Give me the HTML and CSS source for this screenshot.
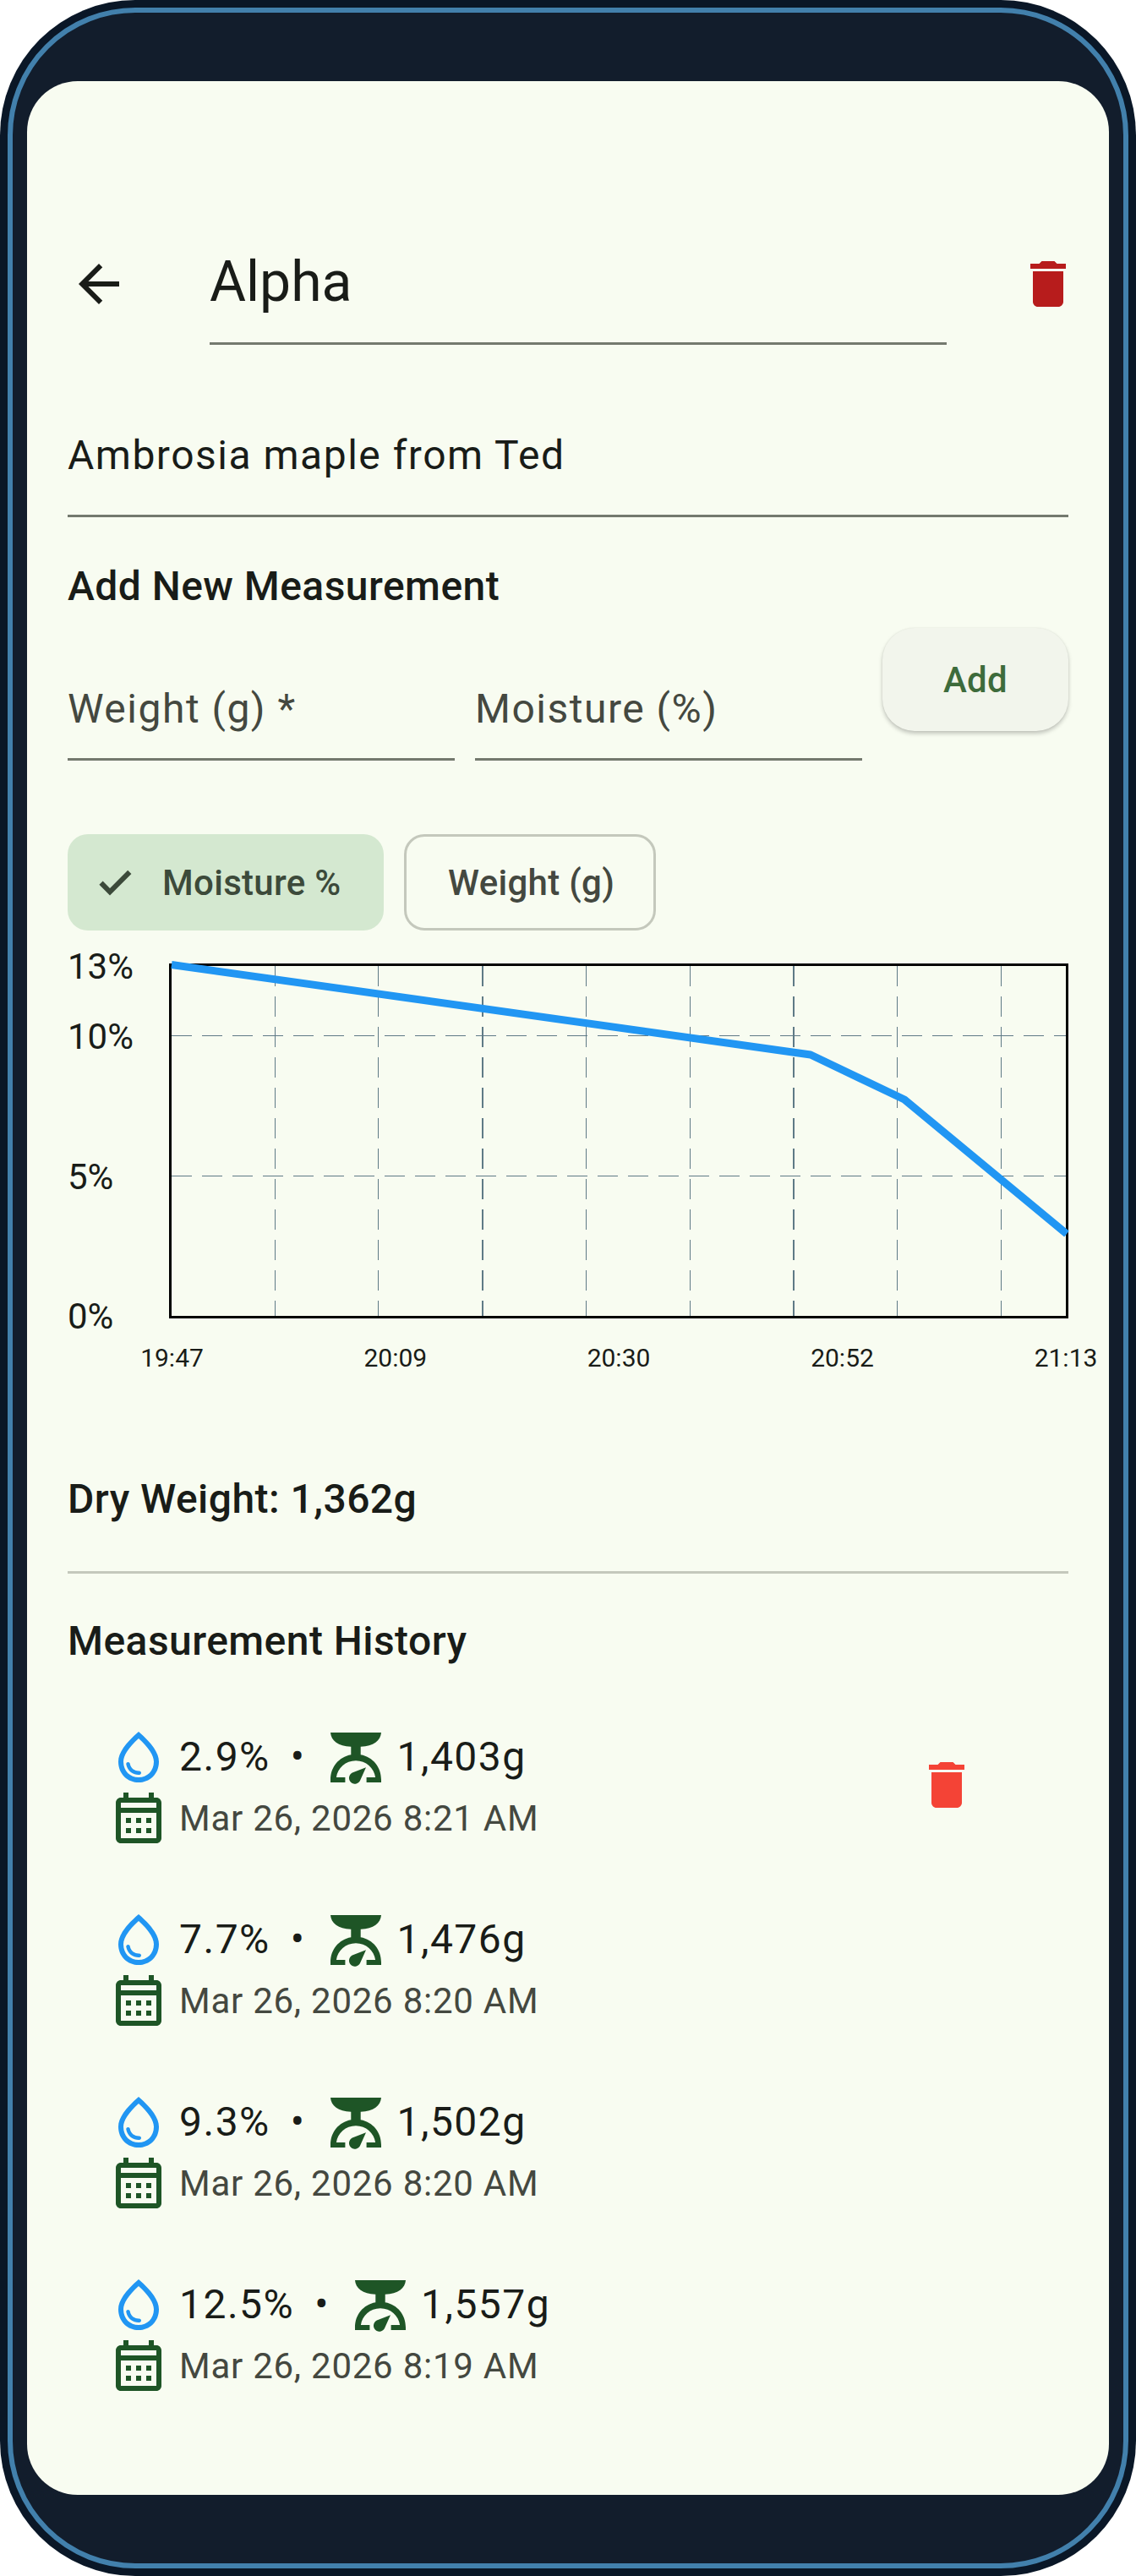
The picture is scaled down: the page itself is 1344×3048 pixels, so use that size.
FILE: index.html
```html
<!DOCTYPE html>
<html lang="en">
<head>
<meta charset="utf-8">
<title>Alpha</title>
<link rel="stylesheet" href="styles.css">
</head>
<body>
<svg class="sprite" xmlns="http://www.w3.org/2000/svg">
  <symbol id="i-back" viewBox="0 0 24 24"><path d="M20 11H7.83l5.59-5.59L12 4l-8 8 8 8 1.41-1.41L7.83 13H20v-2z"/></symbol>
  <symbol id="i-delete" viewBox="0 0 24 24"><path d="M6 19c0 1.1.9 2 2 2h8c1.1 0 2-.9 2-2V7H6v12zM19 4h-3.5l-1-1h-5l-1 1H5v2h14V4z"/></symbol>
  <symbol id="i-check" viewBox="0 0 24 24"><path d="M9 16.17L4.83 12l-1.42 1.41L9 19 21 7l-1.41-1.41z"/></symbol>
  <symbol id="i-drop" viewBox="0 0 24 24"><path d="M12 2c-5.33 4.55-8 8.48-8 11.8 0 4.98 3.8 8.2 8 8.2s8-3.22 8-8.2c0-3.32-2.67-7.25-8-11.8zm0 18c-3.35 0-6-2.57-6-6.2 0-2.34 1.95-5.44 6-9.14 4.05 3.7 6 6.79 6 9.14 0 3.63-2.65 6.2-6 6.2zm-4.17-6c.37 0 .67.26.74.62.41 2.22 2.28 2.98 3.64 2.87.43-.02.79.32.79.75 0 .4-.32.73-.72.75-2.13.13-4.62-1.09-5.19-4.12-.08-.45.28-.87.74-.87z"/></symbol>
  <symbol id="i-calendar" viewBox="0 0 24 24"><path d="M19 4h-1V2h-2v2H8V2H6v2H5c-1.11 0-1.99.9-1.99 2L3 20c0 1.1.89 2 2 2h14c1.1 0 2-.9 2-2V6c0-1.1-.9-2-2-2zm0 16H5V10h14v10zm0-12H5V6h14v2zM9 14H7v-2h2v2zm4 0h-2v-2h2v2zm4 0h-2v-2h2v2zm-8 4H7v-2h2v2zm4 0h-2v-2h2v2zm4 0h-2v-2h2v2z"/></symbol>
  <symbol id="i-scale" viewBox="0 0 24 24"><path d="M2 2.300H22C21.800 5.400 19 7.700 13.900 7.900V11.100C18.800 12 22 16 22 21V22H16.200V20H19.700C19.200 16.300 16 13.400 12 13.400S4.800 16.300 4.300 20H7.800V22H2V21C2 16 5.200 12 10.100 11.100V7.900C5 7.700 2.200 5.400 2 2.300Z"/><path d="M16 16.100L13.800 21A2.300 2.300 0 1 1 10.600 18.200Z"/></symbol>
</svg>
<div class="device">
  <div class="bezel">
    <main class="screen">
      <header class="header">
        <svg class="icon72 back"><use href="#i-back"/></svg>
        <div class="title">Alpha</div>
        <svg class="icon72 del-dark"><use href="#i-delete"/></svg>
      </header>
      <div class="desc"><span>Ambrosia maple from Ted</span></div>
      <h2 class="section add-title">Add New Measurement</h2>
      <div class="form">
        <div class="field">Weight (g) *</div>
        <div class="field">Moisture (%)</div>
        <button class="add-btn" type="button">Add</button>
      </div>
      <div class="chips">
        <div class="chip selected"><svg class="check"><use href="#i-check"/></svg><span>Moisture %</span></div>
        <div class="chip outlined"><span>Weight (g)</span></div>
      </div>
      <svg class="chart" viewBox="80 1120 1232 530" xmlns="http://www.w3.org/2000/svg">
        <g class="grid">
          <path d="M203 1225.500H1261M203 1391.500H1261"/>
          <path d="M325.500 1143V1557M447.500 1143V1557M693.500 1143V1557M816.500 1143V1557M1061.500 1143V1557M1184.500 1143V1557"/>
          <path class="major" d="M571 1143V1557M939 1143V1557"/>
        </g>
        <rect class="frame" x="201.500" y="1141.500" width="1061" height="417"/>
        <polyline class="series" points="203,1141.500 959,1248 1070,1301 1262,1460"/>
        <text class="ax-y" x="80" y="1158">13%</text>
        <text class="ax-y" x="80" y="1241">10%</text>
        <text class="ax-y" x="80" y="1407">5%</text>
        <text class="ax-y" x="80" y="1571.500">0%</text>
        <text class="ax-x" x="203.500" y="1617">19:47</text>
        <text class="ax-x" x="467.800" y="1617">20:09</text>
        <text class="ax-x" x="732" y="1617">20:30</text>
        <text class="ax-x" x="996.500" y="1617">20:52</text>
        <text class="ax-x" x="1261" y="1617">21:13</text>
      </svg>
      <div class="section dry">Dry Weight: 1,362g</div>
      <div class="divider"></div>
      <h2 class="section history">Measurement History</h2>
      <ul class="list">
        <li class="item">
          <div class="item-body">
            <div class="row main"><svg class="icon72 drop"><use href="#i-drop"/></svg><span>2.9%</span><span class="dot">•</span><svg class="icon72 scale"><use href="#i-scale"/></svg><span>1,403g</span></div>
            <div class="row date"><svg class="icon72 cal"><use href="#i-calendar"/></svg><span>Mar 26, 2026 8:21 AM</span></div>
          </div>
          <svg class="icon72 del-light"><use href="#i-delete"/></svg>
        </li>
        <li class="item">
          <div class="item-body">
            <div class="row main"><svg class="icon72 drop"><use href="#i-drop"/></svg><span>7.7%</span><span class="dot">•</span><svg class="icon72 scale"><use href="#i-scale"/></svg><span>1,476g</span></div>
            <div class="row date"><svg class="icon72 cal"><use href="#i-calendar"/></svg><span>Mar 26, 2026 8:20 AM</span></div>
          </div>
        </li>
        <li class="item">
          <div class="item-body">
            <div class="row main"><svg class="icon72 drop"><use href="#i-drop"/></svg><span>9.3%</span><span class="dot">•</span><svg class="icon72 scale"><use href="#i-scale"/></svg><span>1,502g</span></div>
            <div class="row date"><svg class="icon72 cal"><use href="#i-calendar"/></svg><span>Mar 26, 2026 8:20 AM</span></div>
          </div>
        </li>
        <li class="item">
          <div class="item-body">
            <div class="row main"><svg class="icon72 drop"><use href="#i-drop"/></svg><span>12.5%</span><span class="dot">•</span><svg class="icon72 scale"><use href="#i-scale"/></svg><span>1,557g</span></div>
            <div class="row date"><svg class="icon72 cal"><use href="#i-calendar"/></svg><span>Mar 26, 2026 8:19 AM</span></div>
          </div>
        </li>
      </ul>
    </main>
  </div>
</div>
</body>
</html>
```
FILE: styles.css
```css
* { box-sizing: border-box; }
html, body { margin: 0; padding: 0; background: #fff; }
body { font-family: Roboto, "Liberation Sans", sans-serif; color: #191c18; }
.sprite { display: none; }

.device { width: 1344px; height: 3048px; padding: 9px; background: #0a1727; border-radius: 160px; overflow: hidden; }
.bezel { height: 100%; padding: 81px 17px; background: #121d2c; border: 6px solid #4280ac; border-radius: 151px; }
.screen { height: 100%; padding: 204px 48px 0; background: #f8fcf1; border-radius: 60px; overflow: hidden; }

.icon72 { width: 72px; height: 72px; flex: none; display: block; }

.header { display: flex; align-items: flex-start; height: 108px; margin-right: -12px; }
.back { margin-left: 1px; fill: #191c18; }
.title { width: 872px; height: 108px; margin-left: 95px; font-size: 66px; line-height: 68px; border-bottom: 3px solid #74796e; }
.del-dark { margin-left: auto; fill: #b71c1c; }

.desc { display: flex; align-items: flex-end; height: 204px; padding-bottom: 42px; font-size: 48px; line-height: 56px; letter-spacing: 1.5px; border-bottom: 3px solid #74796e; }

.section { margin: 0; font-size: 48px; font-weight: 500; line-height: 56px; letter-spacing: .45px; }
.add-title { margin-top: 54px; }

.form { display: flex; align-items: flex-start; gap: 24px; margin-top: 21px; }
.field { width: 458px; height: 157px; padding-top: 68px; font-size: 48px; line-height: 56px; letter-spacing: 1.5px; color: #444840; border-bottom: 3px solid #74796e; }
.add-btn { width: 220px; height: 122px; padding: 0; border: 0; border-radius: 38px; background: #f2f5ec; color: #3d6b3b; font-family: inherit; font-size: 42px; font-weight: 500; letter-spacing: .3px; box-shadow: 0 3px 5px rgba(0, 0, 0, .22), 0 0 2px rgba(0, 0, 0, .08); }

.chips { display: flex; gap: 24px; margin-top: 87px; }
.chip { display: flex; align-items: center; height: 114px; border-radius: 24px; font-size: 42px; font-weight: 500; letter-spacing: .3px; }
.chip.selected { width: 374px; padding-left: 32px; background: #d4e8d0; color: #3c4a3a; }
.chip.outlined { width: 298px; padding-left: 49px; border: 3px solid #c4c8bc; color: #444840; }
.check { width: 48px; height: 48px; margin-right: 32px; fill: #3c4a3a; stroke: #3c4a3a; stroke-width: 1px; }

.chart { display: block; width: 1232px; height: 530px; margin-top: 19px; }
.grid path { fill: none; stroke: #5f7a86; stroke-width: 1; stroke-dasharray: 24 12; }
.grid path.major { stroke-width: 2; }
.frame { fill: none; stroke: #000; stroke-width: 3; }
.series { fill: none; stroke: #2196f3; stroke-width: 9; stroke-linejoin: round; }
.ax-y { font-size: 42px; fill: #191c18; }
.ax-x { font-size: 30px; fill: #191c18; text-anchor: middle; }

.dry { margin-top: 96px; }
.divider { height: 3px; margin-top: 57px; background: #c4c8bc; }
.history { margin-top: 52px; }

.list { display: flex; flex-direction: column; gap: 72px; margin: 73px 0 0; padding: 0 108px 0 48px; list-style: none; }
.item { display: flex; align-items: center; justify-content: space-between; }
.row { display: flex; align-items: center; height: 72px; }
.main { font-size: 48px; letter-spacing: 1.5px; }
.main span { padding-bottom: 2px; }
.date { font-size: 42px; letter-spacing: .75px; color: #444840; }
.drop { fill: #2196f3; margin-right: 12px; }
.cal { fill: #1e5526; margin-right: 12px; }
.scale { fill: #1e5526; margin-right: 12px; }
.dot { margin: 0 24px; }
.del-light { fill: #f44336; margin-bottom: 6px; }
```
